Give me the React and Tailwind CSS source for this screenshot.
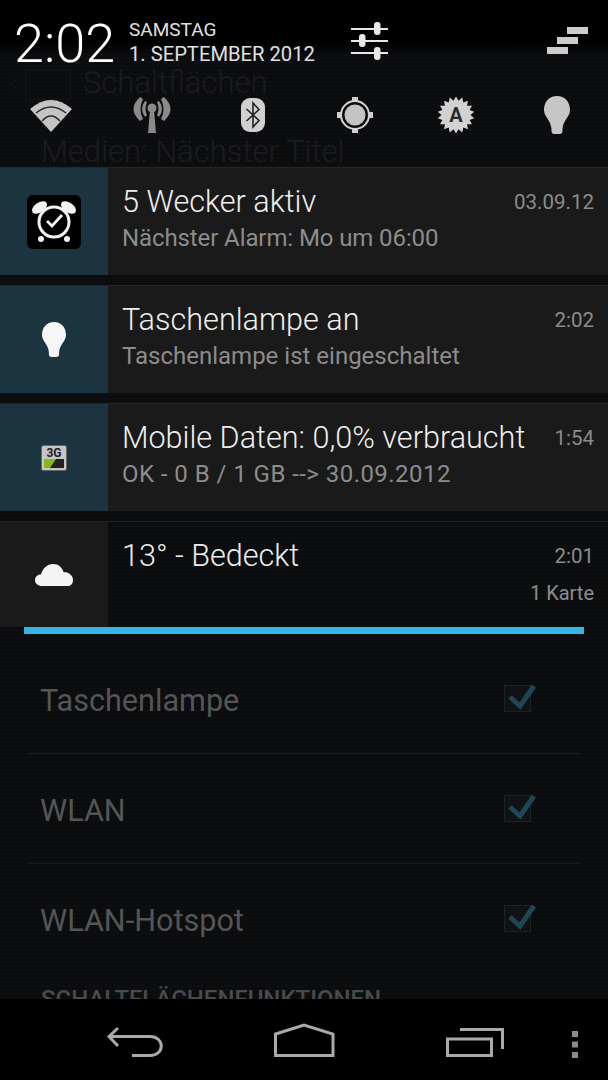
const Wifi = () => (
  <svg width="42" height="36" viewBox="0 0 42 36">
    <path d="M21 35 L0 12 Q21 -6 42 12 Z" fill="#c4c4c4" />
    <path d="M6 16 Q21 4 36 16" fill="none" stroke="#2a2a2a" strokeWidth="1.6" />
    <path d="M12 24 Q21 14 30 24" fill="none" stroke="#2a2a2a" strokeWidth="1.6" />
  </svg>
);
const Antenna = () => (
  <svg width="40" height="38" viewBox="0 0 40 38" fill="#8a8a8a">
    <circle cx="20" cy="12" r="4.5" />
    <path d="M18 14 H22 L24 37 H16 Z" />
    <path d="M8 1 L11 3 Q6 13 11 23 L8 25 Q-5 13 8 1 Z" />
    <path d="M32 1 L29 3 Q34 13 29 23 L32 25 Q45 13 32 1 Z" />
    <path d="M13 5 L15 6 Q12 13 15 19 L13 21 Q7 13 13 5 Z" />
    <path d="M27 5 L25 6 Q28 13 25 19 L27 21 Q33 13 27 5 Z" />
  </svg>
);
const Bluetooth = () => (
  <svg width="26" height="36" viewBox="0 0 26 36">
    <rect x="1" y="1" width="24" height="34" rx="9" fill="#d0d0d0" />
    <path d="M6.5 12 L19 23.5 L13 30 V6 L19 12.5 L6.5 24" fill="none" stroke="#222" strokeWidth="1.6" />
  </svg>
);
const Gps = () => (
  <svg width="36" height="36" viewBox="0 0 36 36">
    <rect x="15" y="0" width="6" height="6" fill="#cfcfcf" />
    <rect x="15" y="30" width="6" height="6" fill="#cfcfcf" />
    <rect x="0" y="15" width="6" height="6" fill="#cfcfcf" />
    <rect x="30" y="15" width="6" height="6" fill="#cfcfcf" />
    <circle cx="18" cy="18" r="14" fill="#0d0e10" stroke="#d4d4d4" strokeWidth="2" />
    <circle cx="18" cy="18" r="10.5" fill="#c4c4c4" />
  </svg>
);
const burst = Array.from({ length: 36 }, (_, i) => {
  const r = i % 2 ? 14.5 : 18.5;
  const a = (i * Math.PI) / 18;
  return `${(19 + r * Math.sin(a)).toFixed(1)},${(19 - r * Math.cos(a)).toFixed(1)}`;
}).join(" ");
const AutoBright = () => (
  <svg width="38" height="38" viewBox="0 0 38 38">
    <polygon points={burst} fill="#d2d2d2" />
    <text x="19" y="26" textAnchor="middle" fontSize="20" fontWeight="700" fontFamily="Roboto, sans-serif" fill="#2a2a2a">A</text>
  </svg>
);
const Bulb = ({ w, h, c }) => (
  <svg width={w} height={h} viewBox="0 0 26 38">
    <path d="M13 0 C21 0 26 6 26 14 C26 21 19 24 18.5 33 V35 Q18.5 38 15.5 38 H10.5 Q7.5 38 7.5 35 V33 C7 24 0 21 0 14 C0 6 5 0 13 0 Z" fill={c} />
  </svg>
);
const Sliders = () => (
  <svg width="38" height="38" viewBox="0 0 38 38" fill="#e8e8e8">
    <rect x="0" y="6" width="37" height="2" />
    <rect x="0" y="18" width="37" height="2" />
    <rect x="0" y="30" width="37" height="2" />
    <rect x="23" y="0" width="6.5" height="13" rx="3" />
    <rect x="8" y="12" width="6.5" height="13" rx="3" />
    <rect x="23" y="25" width="6.5" height="13" rx="3" />
  </svg>
);
const Stairs = () => (
  <svg width="41" height="27" viewBox="0 0 41 27" fill="#cccccc">
    <rect x="20" y="0" width="21" height="7" />
    <rect x="10" y="10" width="21" height="7" />
    <rect x="0" y="20" width="21" height="7" />
  </svg>
);
const Alarm = () => (
  <svg width="54" height="54" viewBox="0 0 54 54">
    <rect width="54" height="54" rx="6" fill="#000" />
    <ellipse cx="12.5" cy="12.5" rx="8.5" ry="5" transform="rotate(-35 12.5 12.5)" fill="#f2f2f2" />
    <ellipse cx="41.5" cy="12.5" rx="8.5" ry="5" transform="rotate(35 41.5 12.5)" fill="#f2f2f2" />
    <circle cx="27" cy="27" r="15" fill="#000" stroke="#f2f2f2" strokeWidth="3" />
    <path d="M20 26 L25 31 L35 20" fill="none" stroke="#f2f2f2" strokeWidth="2.8" />
    <circle cx="14" cy="44" r="3" fill="#f2f2f2" />
    <circle cx="40" cy="44" r="3" fill="#f2f2f2" />
  </svg>
);
const ThreeG = () => (
  <svg width="26" height="26" viewBox="0 0 26 26">
    <rect x="0.5" y="0.5" width="25" height="25" rx="2" fill="#c6c6c6" stroke="#666" />
    <text x="13" y="12" textAnchor="middle" fontSize="12" fontWeight="700" fontFamily="Roboto, sans-serif" fill="#222">3G</text>
    <rect x="3" y="14" width="20" height="9" fill="#222" />
    <path d="M3 14 H15 L9 23 H3 Z" fill="#86b81c" />
  </svg>
);
const Cloud = () => (
  <svg width="38" height="22" viewBox="0 0 38 22" fill="#f4f4f4">
    <path d="M7 22 C3 22 0 19.5 0 16 C0 12.5 3 10.5 6 10.5 C7.5 4.5 12.5 0 18 0 C23.5 0 27 3.5 28.5 8 C33.5 8 38 11.5 38 16 C38 19.5 36 22 33 22 Z" />
  </svg>
);
const Check = () => (
  <div className="relative w-[32px] h-[30px] mb-[8px]">
    <div className="absolute left-0 top-[3px] w-[27px] h-[27px] border border-[#1e2225] bg-[#101214]" />
    <svg className="absolute left-0 top-0" width="32" height="28" viewBox="0 0 32 28">
      <path d="M6 15 L16 24 L30 4" fill="none" stroke="#1f4657" strokeWidth="5" />
    </svg>
  </div>
);
const Card = ({ icon, title, sub, subClass, time }) => (
  <div className="flex h-[108px] border-t border-[#262626]">
    <div className="w-[108px] flex items-center justify-center bg-[#1b3440]">{icon}</div>
    <div className="flex-1 bg-[#1a1a1a] pl-[14px] pr-[14px] pt-[16px]">
      <div className="flex justify-between h-[36px] items-center">
        <span className="text-[30.6px] font-light text-[#eeeeee] mb-[1px]">{title}</span>
        <span className="text-[20.5px] text-[#8c8c8c]">{time}</span>
      </div>
      <div className={`text-[24px] leading-[36px] text-[#8c8c8c] ${subClass}`}>{sub}</div>
    </div>
  </div>
);
const Row = ({ label, border }) => (
  <div className={`flex items-center justify-between h-[110px] pl-[13px] pr-[45px] pt-[4px] ${border ? "border-b border-[#1a1b1d]" : ""}`}>
    <span className="text-[30.6px] text-[#555555]">{label}</span>
    <Check />
  </div>
);
const Nav = () => (
  <div className="h-[81px] bg-black shrink-0 flex items-start relative">
    <svg width="608" height="81" viewBox="0 0 608 81" fill="none" stroke="#aaaaaa" strokeWidth="3">
      <path d="M118 29 L109 37.5 L118 47" />
      <path d="M109 37.5 H150 C165 37.5 165 56.5 150 56.5 H132" />
      <path d="M275.5 35 L304 26 L333 35 V56.5 H275.5 Z" />
      <rect x="447.5" y="40" width="44" height="16.5" />
      <path d="M460 30.5 H502.5 V50" />
      <g fill="#8a8a8a" stroke="none">
        <rect x="572" y="32" width="6" height="6" />
        <rect x="572" y="42.5" width="6" height="6" />
        <rect x="572" y="53" width="6" height="6" />
      </g>
    </svg>
  </div>
);

export default function App() {
  return (
    <div className="w-[608px] h-[1080px] flex flex-col overflow-hidden bg-[#0b0c0e] bg-[radial-gradient(#0f1013_1px,transparent_1px)] bg-[length:4px_4px] font-['Roboto',sans-serif]">
      <div className="flex-1 min-h-0 overflow-hidden">
        <div className="relative h-[167px] bg-[linear-gradient(#000_42px,transparent_56px)]">
          <div className="absolute left-[12px] top-[78px] w-[8px] h-[8px] mt-[2px] border-l-2 border-t-2 border-[#131416] -rotate-45" />
          <div className="absolute left-[25px] top-[70px] w-[46px] h-[30px] border border-[#131416]" />
          <div className="absolute left-[83px] top-[65px] text-[31px] leading-[36px] font-light text-[#1b1c1e]">Schaltflächen</div>
          <div className="absolute left-[41px] top-[134px] text-[31px] leading-[36px] font-light text-[#1b1c1e]">Medien: Nächster Titel</div>
          <div className="relative flex items-start h-[96px] pl-[14px]">
            <div className="text-[54px] leading-[56px] font-light text-white mt-[16px] w-[115px]">2:02</div>
            <div className="pt-[18px] text-[#e0e0e0]">
              <div className="text-[19px] leading-[24px]">SAMSTAG</div>
              <div className="text-[20.2px] leading-[24px]">1. SEPTEMBER 2012</div>
            </div>
            <div className="ml-auto flex items-start">
              <div className="mt-[22px] mr-[158px]"><Sliders /></div>
              <div className="mt-[27px] mr-[20px]"><Stairs /></div>
            </div>
          </div>
          <div className="relative grid grid-cols-6 h-[38px] items-center justify-items-center">
            <Wifi />
            <Antenna />
            <Bluetooth />
            <Gps />
            <AutoBright />
            <Bulb w={26} h={38} c="#c6c6c6" />
          </div>
        </div>
        <div className="flex flex-col gap-[10px]">
          <Card icon={<Alarm />} title="5 Wecker aktiv" sub="Nächster Alarm: Mo um 06:00" subClass="tracking-[-0.1px]" time="03.09.12" />
          <Card icon={<Bulb w={24} h={37} c="#f6f6f6" />} title="Taschenlampe an" sub="Taschenlampe ist eingeschaltet" subClass="tracking-normal" time="2:02" />
          <Card icon={<ThreeG />} title="Mobile Daten: 0,0% verbraucht" sub="OK - 0 B / 1 GB --> 30.09.2012" subClass="tracking-[0.45px]" time="1:54" />
          <div className="flex h-[106px] border-t border-[#232323]">
            <div className="w-[108px] flex items-center justify-center bg-[#1a1a1a]"><Cloud /></div>
            <div className="flex-1 pl-[14px] pr-[14px] pt-[16px]">
              <div className="flex justify-between h-[36px] items-center">
                <span className="text-[30.6px] font-light text-[#eeeeee]">13° - Bedeckt</span>
                <span className="text-[20.5px] text-[#8c8c8c]">2:01</span>
              </div>
              <div className="text-right text-[20px] leading-[28px] mt-[5px] text-[#8c8c8c]">1 Karte</div>
            </div>
          </div>
        </div>
        <div className="mx-[24px] h-[7px] bg-[#33b5e5]" />
        <div className="mx-[27px] mt-[10px]">
          <Row label="Taschenlampe" border />
          <Row label="WLAN" border />
          <Row label="WLAN-Hotspot" />
          <div className="pl-[14px] pt-[11px] text-[24px] leading-[28px] font-medium text-[#4a4a4a]">SCHALTFLÄCHENFUNKTIONEN</div>
        </div>
      </div>
      <Nav />
    </div>
  );
}
